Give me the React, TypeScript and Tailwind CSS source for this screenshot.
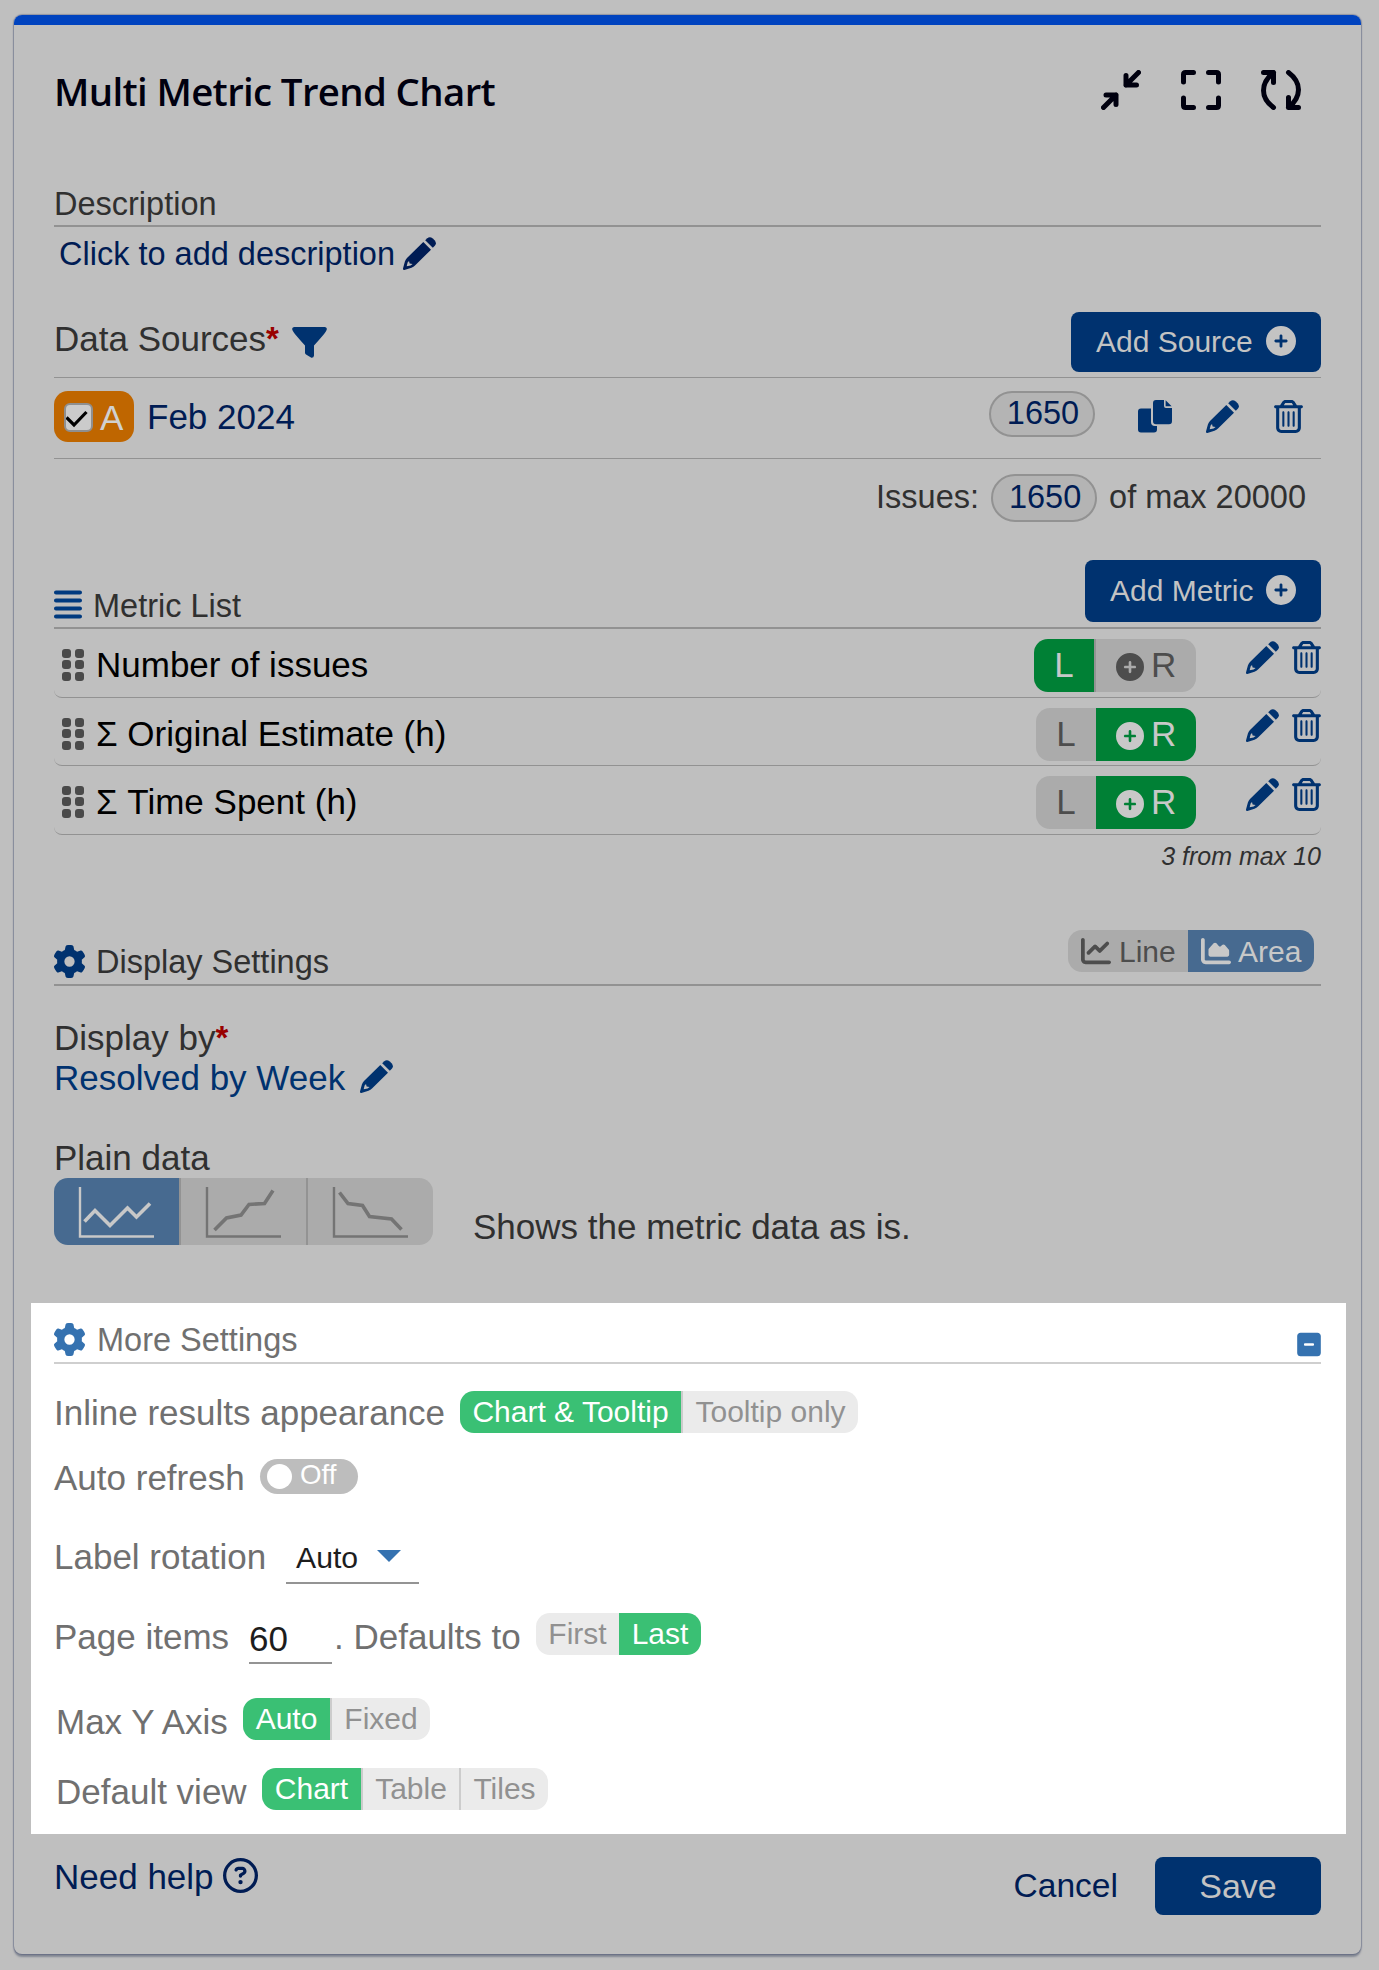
import type { ReactNode } from 'react';
import { clsx } from 'clsx';
import {
  FaAlignJustify,
  FaChartArea,
  FaChartLine,
  FaCirclePlus,
  FaGear,
  FaRegCircleQuestion,
  FaRegTrashCan,
  FaSquareMinus,
} from 'react-icons/fa6';

type Option = { label: string; width: string; active?: boolean };

const METRICS = [
  { name: 'Number of issues', axis: 'L', row: 'h-[69px]', icons: 'mt-3' },
  { name: 'Σ Original Estimate (h)', axis: 'R', row: 'h-[68px]', icons: 'mt-[11px]' },
  { name: 'Σ Time Spent (h)', axis: 'R', row: 'h-[69px]', icons: 'mt-3' },
];

function CollapseIcon() {
  return (
    <svg viewBox="0 0 40 40" className="size-10" fill="none" stroke="#00000f" strokeWidth="5" strokeLinecap="round" strokeLinejoin="round">
      <path d="M37.5 2.5 L25 15 M25 5.5 V15 H35.5" />
      <path d="M2.5 37.5 L15 25 M5 25 H15 V34.5" />
    </svg>
  );
}

function FullscreenIcon() {
  return (
    <svg viewBox="0 0 40 40" className="size-10" fill="none" stroke="#00000f" strokeWidth="5" strokeLinecap="round" strokeLinejoin="round">
      <path d="M2.5 12 V4.5 Q2.5 2.5 4.5 2.5 H12.5 M27.5 2.5 H35.5 Q37.5 2.5 37.5 4.5 V12" />
      <path d="M2.5 28 V35.5 Q2.5 37.5 4.5 37.5 H12.5 M27.5 37.5 H35.5 Q37.5 37.5 37.5 35.5 V28" />
    </svg>
  );
}

function RefreshIcon() {
  return (
    <svg viewBox="0 0 40 40" className="size-10" fill="none" stroke="#00000f" strokeWidth="5" strokeLinecap="round" strokeLinejoin="round">
      <path d="M2.5 2.5 H12.5 V12.5 M12.5 2.5 C-0.8 13.5 -0.8 27.5 12.5 37.5" />
      <path d="M37.5 37.5 H27.5 V27.5 M27.5 37.5 C40.8 26.5 40.8 12.5 27.5 2.5" />
    </svg>
  );
}

function FilterIcon() {
  return (
    <svg viewBox="0 0 35 31" className="w-[35px] h-[31px]" fill="#00326f">
      <path d="M2 0 H33 Q35.5 0.5 34.6 3 Q33.8 5.6 22 18.5 V28.5 Q21.8 31 19.4 30.8 L14 27.6 Q13 27 13 25.5 V18.5 Q1.2 5.6 0.4 3 Q-0.5 0.5 2 0 Z" />
    </svg>
  );
}

function CopyIcon() {
  return (
    <svg viewBox="0 0 34 33" className="w-[34px] h-[33px]" fill="#00326f">
      <path d="M3 8.5 H13 V22 Q13 26 17 26 H19 V29.5 Q19 32.5 16 32.5 H3 Q0 32.5 0 29.5 V11.5 Q0 8.5 3 8.5 Z" />
      <path d="M18 0 H26 V6 Q26 8 28 8 H34 V21 Q34 24.3 31 24.3 H18 Q15 24.3 15 21 V3 Q15 0 18 0 Z" />
      <path d="M27.6 0.3 L33.6 6.3 H27.6 Z" />
    </svg>
  );
}

function PencilIcon({ className }: { className?: string }) {
  return (
    <svg viewBox="0 0 33 33" className={clsx('size-[33px] shrink-0', className)} fill="currentColor">
      <path d="M22.2 3.2 L24.3 1.2 Q26.8 -0.9 29.8 1.4 L31.8 3.4 Q34 6.4 31.8 8.8 L29.8 10.8 Z" />
      <path
        fillRule="evenodd"
        d="M20.3 5 L28 12.7 L12 28.5 Q10.6 29.9 8.5 30.8 L1.4 33 Q-0.3 33.1 0 31.4 L1.9 24.6 Q2.5 22.6 4 21 Z M4.6 25.4 L3.7 29.3 L7.6 28.4 L9.6 27 L6.6 26.6 L6 24 Z"
      />
    </svg>
  );
}

function DragHandle() {
  return (
    <div className="grid grid-cols-2 gap-x-1 gap-y-[2px] w-[22px] h-8 ml-2 mt-5 shrink-0">
      {[0, 1, 2, 3, 4, 5].map((dot) => (
        <span key={dot} className="size-[9px] rounded-[3px] bg-[#4a4a4a]" />
      ))}
    </div>
  );
}

function Segmented({ options, className }: { options: Option[]; className?: string }) {
  return (
    <div className={clsx('flex h-[42px] rounded-[14px] overflow-hidden text-[30px] leading-[42px] shrink-0', className)}>
      {options.map((option, i) => (
        <button
          key={option.label}
          className={clsx(
            'text-center whitespace-nowrap',
            option.width,
            option.active ? 'bg-[#3ac074] text-white' : 'bg-[#ebebeb] text-[#919191]',
            i > 0 && !option.active && 'border-l-2 border-[#cccccc]'
          )}
        >
          {option.label}
        </button>
      ))}
    </div>
  );
}

function AxisToggle({ axis }: { axis: string }) {
  const left = axis === 'L';
  return (
    <div className={clsx('flex h-[53px] mt-[10px] rounded-[14px] overflow-hidden leading-[51px]', left ? 'w-[162px]' : 'w-[160px]')}>
      <span className={clsx('w-[60px] shrink-0 text-center', left ? 'bg-[#008035] text-[#c8c8c8]' : 'bg-[#ababab] text-[#4d4d4d]')}>L</span>
      <span className={clsx('flex flex-1 pl-5', left ? 'bg-[#ababab] text-[#4d4d4d] border-l-2 border-[#939393]' : 'bg-[#008035] text-[#c8c8c8]')}>
        <FaCirclePlus className="size-7 mt-[14px] mr-[7px]" />R
      </span>
    </div>
  );
}

function CountPill({ className, children }: { className?: string; children: ReactNode }) {
  return (
    <span className={clsx('w-[106px] pl-[2px] rounded-full border-2 border-[#929292] bg-[#b4b4b4] text-center text-[32.5px] text-[#001c54] shrink-0', className)}>
      {children}
    </span>
  );
}

function PlainDataPicker() {
  return (
    <div className="flex w-[379px] h-[67px] rounded-[14px] overflow-hidden shrink-0">
      <span className="w-[125px] bg-[#476a90]">
        <svg viewBox="0 0 125 67" className="w-[125px] h-[67px]" fill="none" stroke="#c8c8c8">
          <path d="M26 9 V58.5 H100" strokeWidth="2.4" />
          <path d="M30.5 43.5 L41 32.5 L56 47.5 L73.5 30 L82.5 39 L96 25.5" strokeWidth="3.6" />
        </svg>
      </span>
      <span className="w-[127px] bg-[#ababab] border-l-2 border-[#939393]">
        <svg viewBox="0 0 125 67" className="w-[125px] h-[67px]" fill="none" stroke="#747474">
          <path d="M26 9 V58.5 H100" strokeWidth="2.4" />
          <path d="M33.5 52 L45.5 40 L60 37 L68 26.5 L83.5 25.5 L92 12.5" strokeWidth="3.6" />
        </svg>
      </span>
      <span className="w-[127px] bg-[#ababab] border-l-2 border-[#939393]">
        <svg viewBox="0 0 125 67" className="w-[125px] h-[67px]" fill="none" stroke="#747474">
          <path d="M26 9 V58.5 H100" strokeWidth="2.4" />
          <path d="M31.5 14.5 L40 25.5 L54.5 27.5 L61.5 38.5 L83.5 41 L93.5 51.5" strokeWidth="3.6" />
        </svg>
      </span>
    </div>
  );
}

export default function App() {
  return (
    <div className="w-[1379px] h-[1970px] bg-[#bfbfbf] pt-[15px] pl-[14px] font-['Liberation_Sans',Arial,sans-serif] text-[35px] leading-10 text-[#303030] whitespace-nowrap">
      <div className="w-[1347px] h-[1939px] rounded-lg shadow-[0_0_1px_1px_rgba(60,70,110,0.35),0_3px_2px_rgba(20,35,70,0.35)] overflow-hidden bg-[#bfbfbf]">
        <div className="h-[10px] bg-[#0043bf]" />

        <div className="px-10">
          <header className="flex h-[155px]">
            <h1 className="mt-[41px] font-['Open_Sans',sans-serif] font-semibold text-[38.4px] leading-[50px] tracking-[-0.65px] text-[#00000f]">
              Multi Metric Trend Chart
            </h1>
            <div className="flex gap-10 ml-auto mr-5 mt-[45px]">
              <CollapseIcon />
              <FullscreenIcon />
              <RefreshIcon />
            </div>
          </header>

          <div className="h-[47px] pt-1 border-b-2 border-[#929292] text-[32.5px]">Description</div>
          <div className="flex h-[78px] pt-[7px] pl-[5px] text-[32.5px] text-[#001c54]">
            <span className="w-[344px]">Click to add description</span>
            <PencilIcon className="mt-[3px]" />
          </div>

          <div className="flex h-[73px] border-b border-[#929292]">
            <span className="w-[212px] mt-[14px]">Data Sources</span>
            <span className="w-[14px] mt-[14px] text-[33px] font-bold text-[#990000]">*</span>
            <span className="mt-[22px] ml-3">
              <FilterIcon />
            </span>
            <button className="flex w-[250px] h-[60px] mt-[7px] ml-auto pl-[25px] rounded-lg bg-[#00326f] text-[30px] leading-[59px] text-[#c3c3c3]">
              <span className="w-[170px] text-left">Add Source</span>
              <FaCirclePlus className="size-[30px] mt-[14px]" />
            </button>
          </div>

          <div className="flex h-[81px] border-b border-[#929292] text-[#001c54]">
            <span className="flex w-20 h-[51px] mt-[13px] pl-[10px] rounded-[14px] bg-[#bf6600] text-[#d0d0d0] shrink-0">
              <span className="size-[29px] mt-3 rounded-md border-2 border-[#8f8f8f] bg-[#cbcbcb]">
                <svg viewBox="0 0 25 25" className="size-[25px]" fill="none" stroke="#000" strokeWidth="3.2">
                  <path d="M0.5 12.5 L8 20 L20.5 7" />
                </svg>
              </span>
              <span className="ml-[7px] mt-[7px]">A</span>
            </span>
            <span className="ml-[13px] mt-[19px]">Feb 2024</span>
            <CountPill className="h-[46px] mt-[13px] ml-auto leading-[40px]">1650</CountPill>
            <div className="flex ml-[43px] mt-[22px] w-[183px] text-[#00326f]">
              <CopyIcon />
              <PencilIcon className="ml-[34px]" />
              <FaRegTrashCan className="w-[29px] h-[33px] ml-[35px]" />
            </div>
          </div>

          <div className="flex justify-end h-[101px] pr-[15px] text-[32.5px]">
            <span className="mt-[18px]">Issues:</span>
            <CountPill className="h-12 mt-[15px] ml-[12px] leading-[42px]">1650</CountPill>
            <span className="mt-[18px] ml-3">of max 20000</span>
          </div>

          <div className="flex h-[69px] border-b-2 border-[#929292]">
            <FaAlignJustify className="w-7 h-[33px] mt-[28px] text-[#003a7f]" />
            <span className="mt-[26px] ml-[11px] text-[32.5px]">Metric List</span>
            <button className="flex w-[236px] h-[62px] ml-auto pl-[25px] rounded-lg bg-[#00326f] text-[30px] leading-[61px] text-[#c3c3c3]">
              <span className="w-[156px] text-left">Add Metric</span>
              <FaCirclePlus className="size-[30px] mt-[15px]" />
            </button>
          </div>

          {METRICS.map((metric) => (
            <div key={metric.name} className={clsx('flex border-b border-[#929292] rounded-b-lg', metric.row)}>
              <DragHandle />
              <span className="mt-4 ml-3 text-black">{metric.name}</span>
              <div className="flex ml-auto text-[#00326f]">
                <AxisToggle axis={metric.axis} />
                <PencilIcon className={clsx('ml-[50px]', metric.icons)} />
                <FaRegTrashCan className={clsx('w-[29px] h-[33px] ml-[13px]', metric.icons)} />
              </div>
            </div>
          ))}
          <div className="h-[95px] pt-px text-right text-[25px] italic">3 from max 10</div>

          <div className="flex h-14 border-b-2 border-[#929292]">
            <FaGear className="size-[33px] mt-[15px] -ml-px text-[#00326f]" />
            <span className="mt-3 ml-[10px] text-[32.5px]">Display Settings</span>
            <div className="flex h-[42px] ml-auto mr-[7px] rounded-[14px] overflow-hidden text-[30px] leading-[43px]">
              <span className="flex w-[120px] pl-[13px] bg-[#ababab] text-[#4d4d4d]">
                <FaChartLine className="size-[30px] mt-[6px] mr-2" />
                Line
              </span>
              <span className="flex w-[126px] pl-[13px] bg-[#476a90] text-[#c8c8c8]">
                <FaChartArea className="size-[30px] mt-[6px] mr-[7px]" />
                Area
              </span>
            </div>
          </div>

          <div className="flex mt-8">
            Display by
            <span className="text-[33px] font-bold text-[#990000]">*</span>
          </div>
          <div className="flex text-[#00326f]">
            <span className="w-[306px]">Resolved by Week</span>
            <PencilIcon className="mt-[2px]" />
          </div>

          <div className="mt-10">Plain data</div>
          <div className="flex">
            <PlainDataPicker />
            <span className="mt-[29px] ml-10">Shows the metric data as is.</span>
          </div>
        </div>

        <section className="w-[1315px] h-[531px] mt-[56px] ml-[17px] pl-[23px] pr-[25px] bg-white text-[#707070]">
          <div className="flex h-[61px] border-b-2 border-[#cfcfcf]">
            <FaGear className="size-[33px] mt-5 -ml-px text-[#3572b0]" />
            <span className="mt-[17px] ml-[11px] text-[32.5px]">More Settings</span>
            <FaSquareMinus className="w-6 h-[27px] mt-7 ml-auto text-[#3572b0]" />
          </div>

          <div className="flex h-[42px] mt-[27px]">
            <span className="w-[406px] mt-[2px]">Inline results appearance</span>
            <Segmented
              options={[
                { label: 'Chart & Tooltip', width: 'w-[221px]', active: true },
                { label: 'Tooltip only', width: 'w-[177px]' },
              ]}
            />
          </div>

          <div className="flex h-10 mt-[25px]">
            <span className="w-[206px]">Auto refresh</span>
            <div className="flex w-[98px] h-[35px] mt-px rounded-full bg-[#bdbdbd] text-white text-[27.7px] leading-8">
              <span className="size-[25px] mt-[5px] ml-[7px] mr-2 rounded-full bg-white" />
              Off
            </div>
          </div>

          <div className="flex h-[47px] mt-[39px]">
            <span className="w-[232px]">Label rotation</span>
            <div className="flex w-[133px] pl-[10px] pt-px border-b-2 border-[#949494] text-[30.2px] text-[#1d1d1d]">
              Auto
              <svg viewBox="0 0 24 12" className="w-6 h-3 mt-3 ml-[19px]" fill="#3572b0">
                <path d="M0 0 H24 L12 12 Z" />
              </svg>
            </div>
          </div>

          <div className="flex h-[51px] mt-[29px]">
            <span className="w-[195px] mt-1">Page items</span>
            <span className="w-[83px] pt-[6px] border-b-2 border-[#949494] text-[#1d1d1d]">60</span>
            <span className="w-[204px] mt-1 pl-[2px]">. Defaults to</span>
            <Segmented
              options={[
                { label: 'First', width: 'w-[83px]' },
                { label: 'Last', width: 'w-[82px]', active: true },
              ]}
            />
          </div>

          <div className="flex h-[42px] mt-[34px]">
            <span className="w-[189px] mt-1 pl-[2px]">Max Y Axis</span>
            <Segmented
              options={[
                { label: 'Auto', width: 'w-[87px]', active: true },
                { label: 'Fixed', width: 'w-[100px]' },
              ]}
            />
          </div>

          <div className="flex h-[42px] mt-7">
            <span className="w-[208px] mt-1 pl-[2px]">Default view</span>
            <Segmented
              options={[
                { label: 'Chart', width: 'w-[99px]', active: true },
                { label: 'Table', width: 'w-[98px]' },
                { label: 'Tiles', width: 'w-[89px]' },
              ]}
            />
          </div>
        </section>

        <footer className="flex mt-[23px] px-10 text-[#001c54]">
          <span className="w-[169px]">Need help</span>
          <FaRegCircleQuestion className="size-[35px] mt-px" />
          <button className="ml-auto h-[58px] text-[33.6px] leading-[56px]">Cancel</button>
          <button className="w-[166px] h-[58px] ml-[37px] rounded-lg bg-[#00326f] text-[34px] leading-[56px] text-[#c3c3c3]">Save</button>
        </footer>
      </div>
    </div>
  );
}
